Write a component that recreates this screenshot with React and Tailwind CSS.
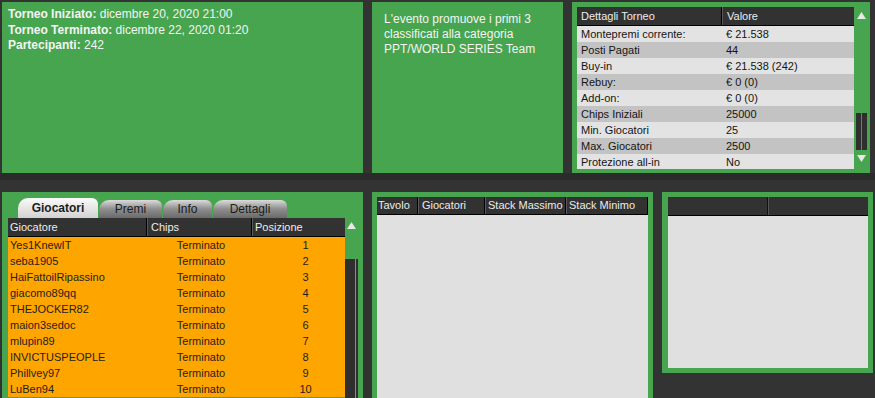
import React from "react";

const G = "bg-[#47a54f]";

function Up({ className = "" }) {
  return (
    <svg width="9" height="7" viewBox="0 0 9 7" className={className}>
      <polygon points="4.5,0 9,7 0,7" fill="#e8e8e8" />
    </svg>
  );
}
function Down({ className = "" }) {
  return (
    <svg width="9" height="7" viewBox="0 0 9 7" className={className}>
      <polygon points="0,0 9,0 4.5,7" fill="#e8e8e8" />
    </svg>
  );
}

const details = [
  ["Montepremi corrente:", "€ 21.538"],
  ["Posti Pagati", "44"],
  ["Buy-in", "€ 21.538 (242)"],
  ["Rebuy:", "€ 0 (0)"],
  ["Add-on:", "€ 0 (0)"],
  ["Chips Iniziali", "25000"],
  ["Min. Giocatori", "25"],
  ["Max. Giocatori", "2500"],
  ["Protezione all-in", "No"],
];

const players = [
  "Yes1KnewIT",
  "seba1905",
  "HaiFattoilRipassino",
  "giacomo89qq",
  "THEJOCKER82",
  "maion3sedoc",
  "mlupin89",
  "INVICTUSPEOPLE",
  "Phillvey97",
  "LuBen94",
];

function HeadCell({ w, children, className = "" }) {
  return (
    <div
      className={`h-full shrink-0 flex items-center whitespace-nowrap overflow-hidden border-r border-r-black border-l border-l-[#5a5a5a] ${className}`}
      style={{ width: w }}
    >
      {children}
    </div>
  );
}

const tabOff =
  "h-[18px] rounded-tl-[10px] rounded-tr-[6px] bg-linear-to-b from-[#dcdcdc] via-[#8e8e8e] to-[#6a6a6a] flex items-center justify-center text-[12px] text-[#1c1c1c]";

export default function App() {
  return (
    <div className="w-[875px] h-[398px] bg-[#333333] overflow-hidden flex flex-col font-['Liberation_Sans',Arial,sans-serif] text-[12px]">
      {/* top row */}
      <div className="flex h-[173px] shrink-0 pt-[2px] pl-[2px] gap-[9px]">
        <div className={`w-[361px] h-full ${G} pl-[6px] pt-[5px] text-[#f4f4f4] leading-[15.5px]`}>
          <div>
            <span className="font-bold">Torneo Iniziato:</span> dicembre 20, 2020 21:00
          </div>
          <div>
            <span className="font-bold">Torneo Terminato:</span> dicembre 22, 2020 01:20
          </div>
          <div>
            <span className="font-bold">Partecipanti:</span> 242
          </div>
        </div>
        <div className={`w-[191px] h-full ${G} pl-[12px] pt-[10px] pr-[8px] text-[#f4f4f4] leading-[15px]`}>
          L'evento promuove i primi 3 classificati alla categoria PPT/WORLD SERIES Team
        </div>
        <div className={`w-[298px] h-full ${G} pl-[5px] pt-[5px] flex text-[11px]`}>
          <div className="w-[277px] h-[162px] overflow-hidden flex flex-col">
            <div className="h-[19px] shrink-0 bg-[#323232] flex text-[#ececec] border-b border-black">
              <div className="w-[145px] pl-[4px] flex items-center border-r border-black">Dettagli Torneo</div>
              <div className="flex-1 pl-[4px] flex items-center border-l border-[#5a5a5a]">Valore</div>
            </div>
            {details.map(([k, v], i) => (
              <div
                key={k}
                className={`h-[16px] shrink-0 flex items-center leading-[14px] text-[#151515] ${i % 2 === 0 ? "bg-[#e3e3e3]" : "bg-[#c3c3c3]"}`}
              >
                <div className="w-[145px] pl-[4px]">{k}</div>
                <div className="flex-1 pl-[4px]">{v}</div>
              </div>
            ))}
          </div>
          <div className="w-[14px] h-[160px] flex flex-col items-center">
            <Up className="mt-[5px]" />
            <div className="flex-1" />
            <div className="w-[11px] h-[37px] bg-[#2f2f2f] flex justify-center mb-[5px]">
              <div className="w-px h-full bg-[#777]" />
            </div>
            <Down className="mb-[5px]" />
          </div>
        </div>
      </div>

      {/* gap band */}
      <div className="h-[7px] shrink-0 bg-[#2b2b2b]" />
      <div className="h-[12px] shrink-0" />

      {/* bottom row */}
      <div className="flex pl-[2px] gap-[9px] flex-1 min-h-0">
        {/* players panel */}
        <div className={`w-[361px] h-full ${G} flex flex-col`}>
          <div className="h-[6px] shrink-0" />
          <div className="h-[20px] shrink-0 flex items-end pl-[16px] gap-[1px]">
            <div className="w-[80px] h-[20px] rounded-tl-[10px] rounded-tr-[6px] bg-linear-to-b from-[#fbfbfb] to-[#d2d2d2] flex items-center justify-center font-bold text-[12px] text-[#1c1c1c]">
              Giocatori
            </div>
            <div className={`w-[63px] ${tabOff}`}>Premi</div>
            <div className={`w-[49px] ${tabOff}`}>Info</div>
            <div className={`w-[74px] ${tabOff}`}>Dettagli</div>
          </div>
          <div className="flex flex-1 min-h-0 pl-[6px] text-[11px]">
            <div className="w-[337px] flex flex-col overflow-hidden">
              <div className="h-[19px] shrink-0 bg-[#323232] flex text-[#ececec] border-b border-black">
                <div className="w-[139px] pl-[2px] flex items-center border-r border-black">Giocatore</div>
                <div className="w-[105px] pl-[3px] flex items-center border-r border-black border-l border-l-[#5a5a5a]">Chips</div>
                <div className="flex-1 pl-[2px] flex items-center border-l border-[#5a5a5a]">Posizione</div>
              </div>
              {players.map((p, i) => (
                <div key={p} className="h-[16px] shrink-0 bg-[#ffa500] flex items-center text-[#1e1e1e]">
                  <div className="w-[139px] pl-[2px]">{p}</div>
                  <div className="w-[105px] pl-[3px] text-center">Terminato</div>
                  <div className="flex-1 pl-[14px] text-center">{i + 1}</div>
                </div>
              ))}
            </div>
            <div className="w-[13px] h-full flex flex-col">
              <div className={`h-[41px] shrink-0 ${G} rounded-b-[5px] flex justify-center`}>
                <Up className="mt-[4px]" />
              </div>
              <div className="flex-1 bg-[#2f2f2f] flex justify-end pr-[2px]">
                <div className="w-px h-full bg-[#8a8a8a]" />
              </div>
            </div>
          </div>
        </div>

        {/* tables panel */}
        <div className={`w-[281px] h-full ${G} pl-[5px] pt-[5px] flex flex-col text-[11px]`}>
          <div className="w-[271px] flex-1 flex flex-col">
            <div className="h-[18px] shrink-0 bg-[#323232] flex text-[#ececec] border-b border-black">
              <HeadCell w={41} className="pl-[1px] border-l-0">Tavolo</HeadCell>
              <HeadCell w={67} className="pl-[3px]">Giocatori</HeadCell>
              <HeadCell w={81} className="pl-[2px]">Stack Massimo</HeadCell>
              <HeadCell w={82} className="pl-[2px]">Stack Minimo</HeadCell>
            </div>
            <div className="flex-1 bg-[#e0e0e0]" />
          </div>
        </div>

        {/* right empty panel */}
        <div className={`w-[211px] h-[181px] ${G} pl-[6px] pt-[5px] pb-[5px] flex flex-col`}>
          <div className="w-[200px] flex-1 flex flex-col">
            <div className="h-[19px] shrink-0 bg-[#323232] flex border-b border-black">
              <div className="w-[100px] h-full border-r border-[#111]" />
              <div className="flex-1 h-full border-l border-[#555]" />
            </div>
            <div className="flex-1 bg-[#e0e0e0]" />
          </div>
        </div>
      </div>
    </div>
  );
}
